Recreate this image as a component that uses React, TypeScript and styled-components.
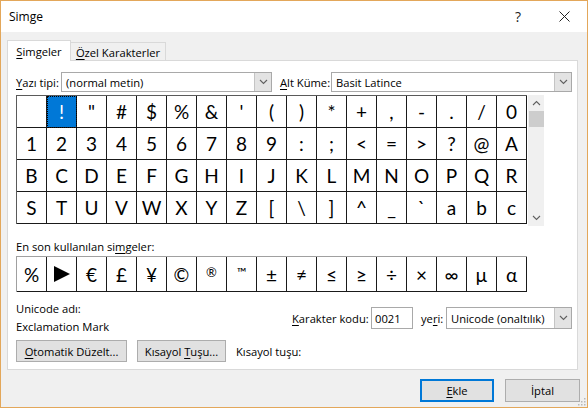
import React from "react";
import styled, { createGlobalStyle } from "styled-components";

const GlobalStyle = createGlobalStyle`
  html, body { margin: 0; padding: 0; background: #f0f0f0; }
  body { font-family: "Segoe UI", "Open Sans", "Noto Sans", sans-serif; font-size: 11.2px; color: #000; }
`;

const Window = styled.div`
  width: 588px;
  height: 408px;
  box-sizing: border-box;
  border: 1px solid #e3a75a;
  background: #f0f0f0;
  display: flex;
  flex-direction: column;
  position: relative;
  overflow: hidden;
`;

const TitleBar = styled.div`
  height: 31px;
  background: #fff;
  display: flex;
  align-items: center;
  padding-left: 8px;
  font-size: 12px;
`;

const TitleText = styled.span`
  flex: 1;
`;

const TitleButton = styled.div`
  width: 46px;
  height: 31px;
  display: flex;
  align-items: center;
  justify-content: center;
  font-size: 14px;
  color: #222;
`;

const TabsRow = styled.div`
  display: flex;
  align-items: flex-end;
  padding: 8px 0 0 6px;
`;

const Tab = styled.div<{ $active?: boolean; $w: number }>`
  width: ${(p) => p.$w}px;
  box-sizing: border-box;
  height: ${(p) => (p.$active ? 21 : 18)}px;
  border: 1px solid #d9d9d9;
  border-bottom: none;
  background: ${(p) => (p.$active ? "#fff" : "#f0f0f0")};
  margin-bottom: ${(p) => (p.$active ? "-1px" : "0")};
  margin-left: ${(p) => (p.$active ? "0" : "-1px")};
  position: relative;
  z-index: ${(p) => (p.$active ? 1 : 0)};
  display: flex;
  align-items: center;
  justify-content: center;
  padding-top: ${(p) => (p.$active ? "0" : "1px")};
`;

const Panel = styled.div`
  margin: 0 9px 0 6px;
  background: #fff;
  border: 1px solid #d9d9d9;
  padding: 11px 5px 7px 8px;
  display: flex;
  flex-direction: column;
`;

const Row = styled.div`
  display: flex;
  align-items: center;
`;

const Label = styled.span<{ $w?: number; $ml?: number }>`
  width: ${(p) => (p.$w ? `${p.$w}px` : "auto")};
  margin-left: ${(p) => p.$ml ?? 0}px;
  flex-shrink: 0;
  white-space: nowrap;
`;

const U = styled.span`
  text-decoration: underline;
  text-underline-offset: 2px;
`;

const Combo = styled.div<{ $w: number; $h?: number }>`
  width: ${(p) => p.$w}px;
  height: ${(p) => p.$h ?? 20}px;
  box-sizing: border-box;
  border: 1px solid #a9a9a9;
  background: #fff;
  display: flex;
  align-items: center;
`;

const ComboText = styled.span`
  flex: 1;
  padding-left: 4px;
  white-space: nowrap;
  overflow: hidden;
`;

const ComboButton = styled.div`
  width: 17px;
  height: 100%;
  box-sizing: border-box;
  background: #e3e3e3;
  border-left: 1px solid #c4c4c4;
  display: flex;
  align-items: center;
  justify-content: center;
`;

const GridArea = styled.div`
  display: flex;
  margin-top: 3px;
`;

const CharGrid = styled.div`
  display: grid;
  grid-template-columns: repeat(17, 30px);
  border-top: 1px solid #5a5a5a;
  border-left: 1px solid #5a5a5a;
  align-self: flex-start;
`;

const Cell = styled.div<{ $h: number; $selected?: boolean; $small?: boolean }>`
  height: ${(p) => p.$h}px;
  box-sizing: border-box;
  border-right: 1px solid #1a1a1a;
  border-bottom: 1px solid #1a1a1a;
  display: flex;
  align-items: ${(p) => (p.$small ? "flex-start" : "center")};
  padding-top: ${(p) => (p.$small ? "7px" : "0")};
  justify-content: center;
  font-family: "Lato", "Open Sans", sans-serif;
  font-size: ${(p) => (p.$small ? 13 : 19)}px;
  background: ${(p) => (p.$selected ? "#0078d7" : "#fff")};
  color: ${(p) => (p.$selected ? "#fff" : "#000")};
  outline: ${(p) => (p.$selected ? "1px dotted #000" : "none")};
  outline-offset: -1px;
`;

const Scrollbar = styled.div`
  width: 16px;
  height: 131px;
  background: #f0f0f0;
  display: flex;
  flex-direction: column;
  align-items: center;
  margin-left: 1px;
`;

const ScrollArrow = styled.div`
  height: 16px;
  width: 16px;
  display: flex;
  align-items: center;
  justify-content: center;
`;

const ScrollThumb = styled.div`
  width: 15px;
  height: 16px;
  background: #cdcdcd;
`;

const ScrollTrack = styled.div`
  flex: 1;
`;

const SectionLabel = styled.div`
  margin-top: 13px;
  line-height: 16px;
`;

const RecentRow = styled(CharGrid)`
  margin-top: 1px;
  border-top-color: #a0a0a0;
  border-left-color: #a0a0a0;
`;

const InfoRow = styled.div`
  display: flex;
  justify-content: space-between;
  align-items: center;
  margin-top: 8px;
`;

const InfoColumn = styled.div`
  display: flex;
  flex-direction: column;
  line-height: 18px;
`;

const CodeInput = styled.div`
  width: 42px;
  height: 22px;
  box-sizing: border-box;
  border: 1px solid #a9a9a9;
  display: flex;
  align-items: center;
  padding-left: 3px;
`;

const ButtonsRow = styled.div`
  display: flex;
  align-items: center;
  gap: 10px;
  margin-top: 4px;
`;

const Button = styled.div<{ $w: number; $h?: number; $default?: boolean }>`
  width: ${(p) => p.$w}px;
  height: ${(p) => p.$h ?? 22}px;
  box-sizing: border-box;
  background: #e1e1e1;
  border: ${(p) => (p.$default ? "2px solid #0078d7" : "1px solid #adadad")};
  display: flex;
  align-items: center;
  justify-content: center;
  white-space: nowrap;
`;

const Footer = styled.div`
  display: flex;
  justify-content: flex-end;
  gap: 11px;
  padding: 9px 7px 0 0;
`;

const Grip = styled.svg`
  position: absolute;
  right: 1px;
  bottom: 1px;
`;

const Chevron = ({ up }: { up?: boolean }) => (
  <svg width="9" height="6" viewBox="0 0 9 6">
    <path
      d={up ? "M1 5 L4.5 1.5 L8 5" : "M1 1 L4.5 4.5 L8 1"}
      fill="none"
      stroke="#606060"
      strokeWidth="1.1"
    />
  </svg>
);

const rows = [
  [" ", "!", '"', "#", "$", "%", "&", "'", "(", ")", "*", "+", ",", "-", ".", "/", "0"],
  ["1", "2", "3", "4", "5", "6", "7", "8", "9", ":", ";", "<", "=", ">", "?", "@", "A"],
  ["B", "C", "D", "E", "F", "G", "H", "I", "J", "K", "L", "M", "N", "O", "P", "Q", "R"],
  ["S", "T", "U", "V", "W", "X", "Y", "Z", "[", "\\", "]", "^", "_", "`", "a", "b", "c"],
];

const recent = ["%", "▶", "€", "£", "¥", "©", "®", "™", "±", "≠", "≤", "≥", "÷", "×", "∞", "µ", "α"];

export default function App() {
  return (
    <>
      <GlobalStyle />
      <Window>
        <TitleBar>
          <TitleText>Simge</TitleText>
          <TitleButton>?</TitleButton>
          <TitleButton>
            <svg width="11" height="11" viewBox="0 0 11 11">
              <path d="M0.5 0.5 L10.5 10.5 M10.5 0.5 L0.5 10.5" stroke="#222" strokeWidth="1" />
            </svg>
          </TitleButton>
        </TitleBar>

        <TabsRow>
          <Tab $active $w={64}>
            <span>
              <U>S</U>imgeler
            </span>
          </Tab>
          <Tab $w={96}>
            <span>
              <U>Ö</U>zel Karakterler
            </span>
          </Tab>
        </TabsRow>

        <Panel>
          <Row>
            <Label $w={45}>
              <U>Y</U>azı tipi:
            </Label>
            <Combo $w={211}>
              <ComboText>(normal metin)</ComboText>
              <ComboButton>
                <Chevron />
              </ComboButton>
            </Combo>
            <Label $w={51} $ml={8}>
              <U>A</U>lt Küme:
            </Label>
            <Combo $w={241}>
              <ComboText>Basit Latince</ComboText>
              <ComboButton>
                <Chevron />
              </ComboButton>
            </Combo>
          </Row>

          <GridArea>
            <CharGrid>
              {rows.flatMap((r, ri) =>
                r.map((c, ci) => (
                  <Cell key={`${ri}-${ci}`} $h={32} $selected={ri === 0 && ci === 1}>
                    {c}
                  </Cell>
                ))
              )}
            </CharGrid>
            <Scrollbar>
              <ScrollArrow>
                <Chevron up />
              </ScrollArrow>
              <ScrollThumb />
              <ScrollTrack />
              <ScrollArrow>
                <Chevron />
              </ScrollArrow>
            </Scrollbar>
          </GridArea>

          <SectionLabel>
            En son kullanılan si<U>m</U>geler:
          </SectionLabel>
          <RecentRow>
            {recent.map((c, i) => (
              <Cell key={i} $h={35} $small={c === "®" || c === "™"}>
                {c === "▶" ? (
                  <svg width="18" height="16" viewBox="0 0 18 16">
                    <path d="M1 0 L17 8 L1 16 Z" fill="#000" />
                  </svg>
                ) : (
                  c
                )}
              </Cell>
            ))}
          </RecentRow>

          <InfoRow>
            <InfoColumn>
              <span>Unicode adı:</span>
              <span>Exclamation Mark</span>
            </InfoColumn>
            <Row>
              <Label $w={79}>
                <U>K</U>arakter kodu:
              </Label>
              <CodeInput>0021</CodeInput>
              <Label $w={25} $ml={8}>
                ye<U>r</U>i:
              </Label>
              <Combo $w={126} $h={22}>
                <ComboText>Unicode (onaltılık)</ComboText>
                <ComboButton>
                  <Chevron />
                </ComboButton>
              </Combo>
            </Row>
          </InfoRow>

          <ButtonsRow>
            <Button $w={111}>
              <span>
                <U>O</U>tomatik Düzelt...
              </span>
            </Button>
            <Button $w={89}>
              <span>
                Kısayol <U>T</U>uşu...
              </span>
            </Button>
            <Label>Kısayol tuşu:</Label>
          </ButtonsRow>
        </Panel>

        <Footer>
          <Button $w={74} $h={23} $default>
            <span>
              <U>E</U>kle
            </span>
          </Button>
          <Button $w={75} $h={23}>
            İptal
          </Button>
        </Footer>

        <Grip width="10" height="10" viewBox="0 0 10 10">
          <g fill="#b8b8b8">
            <rect x="8" y="2" width="1.5" height="1.5" />
            <rect x="5" y="5" width="1.5" height="1.5" />
            <rect x="8" y="5" width="1.5" height="1.5" />
            <rect x="2" y="8" width="1.5" height="1.5" />
            <rect x="5" y="8" width="1.5" height="1.5" />
            <rect x="8" y="8" width="1.5" height="1.5" />
          </g>
        </Grip>
      </Window>
    </>
  );
}
